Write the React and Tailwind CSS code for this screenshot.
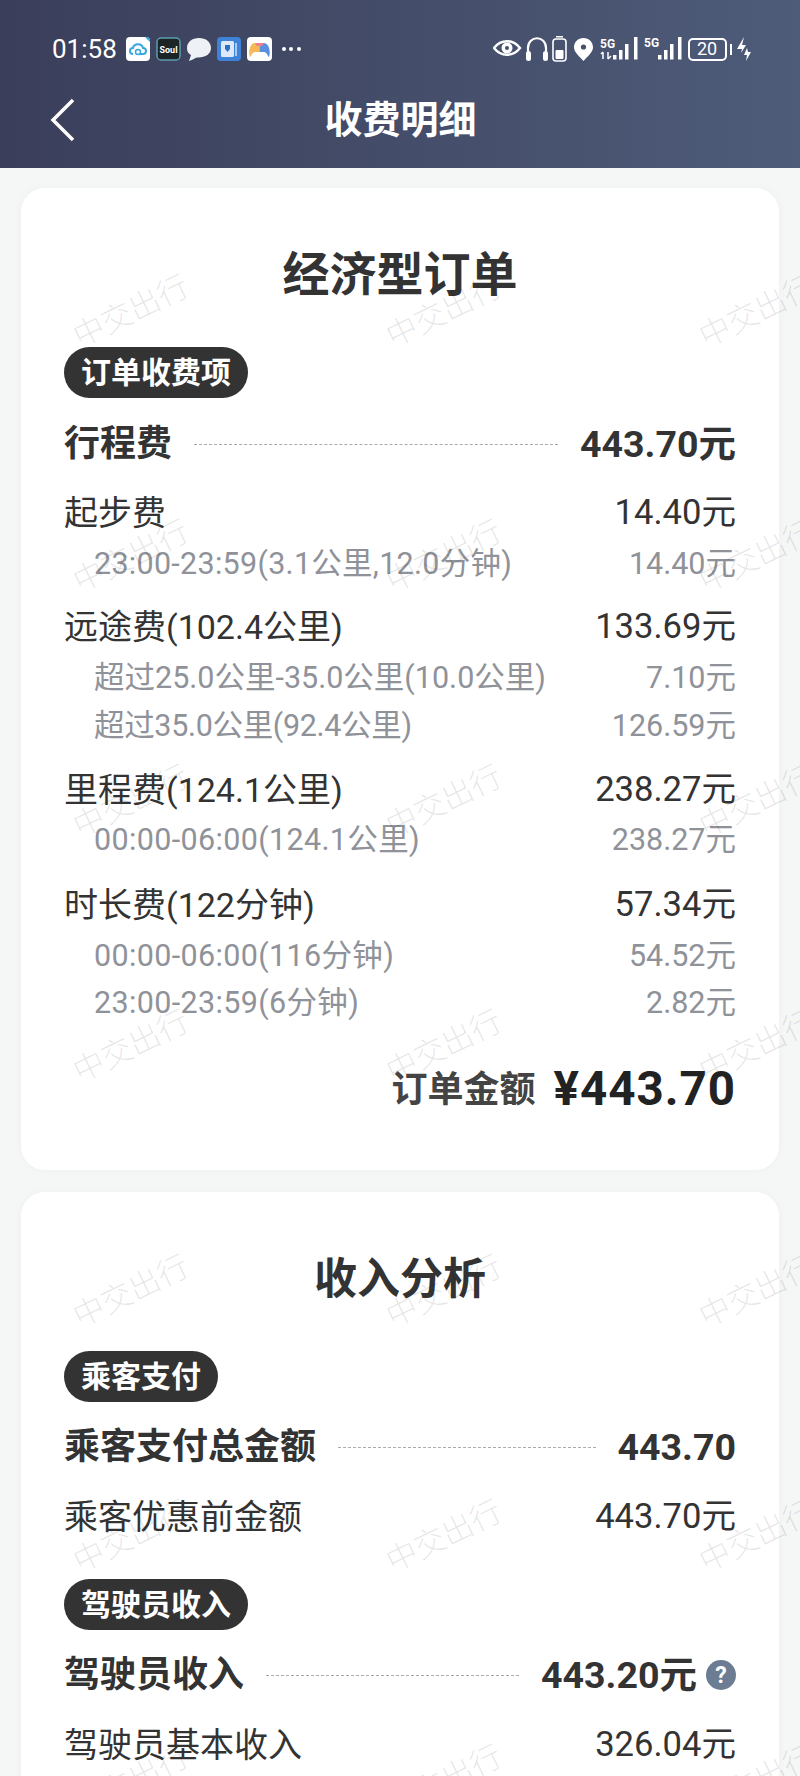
const font = { sans: 'font-[Roboto,"Noto_Sans_CJK_SC",sans-serif]' };

function StatusIcons() {
  return (
    <svg width="189" height="30" viewBox="0 0 189 30" fill="none">
      {/* eye */}
      <path d="M1 14 C8 5 20 5 27 14 C20 23 8 23 1 14 Z" stroke="#fff" strokeWidth="2.400" />
      <circle cx="14" cy="14" r="5.500" fill="#fff" />
      <circle cx="14" cy="14" r="2" fill="#46506c" />
      {/* headphones */}
      <path d="M35 20 V14 C35 1 53 1 53 14 V20" stroke="#fff" strokeWidth="2.200" />
      <rect x="33" y="17" width="5" height="10" rx="2.500" fill="#fff" />
      <rect x="50" y="17" width="5" height="10" rx="2.500" fill="#fff" />
      {/* small battery */}
      <rect x="60" y="5" width="13" height="22" rx="3" stroke="#fff" strokeWidth="1.600" />
      <rect x="63" y="2" width="7" height="1.500" fill="#fff" />
      <rect x="62.500" y="16" width="8" height="9" rx="1" fill="#fff" />
      {/* pin */}
      <path d="M90.500 4 C85 4 81 8 81 13.500 C81 18 87 23 90.500 27 C94 23 100 18 100 13.500 C100 8 96 4 90.500 4 Z" fill="#fff" />
      <circle cx="90.500" cy="13" r="2.600" fill="#46506c" />
      {/* first sim */}
      <text x="107" y="14" fontSize="12" fontWeight="700" fill="#fff" fontFamily="Roboto, sans-serif">5G</text>
      <path d="M110 18 V25 M108 20 L110 18 M115 18 V25 M115 25 L118 22" stroke="#fff" strokeWidth="1.500" />
      <rect x="120" y="21" width="3.500" height="4.500" fill="#fff" />
      <rect x="126" y="16" width="3.500" height="9.500" fill="#fff" />
      <rect x="132" y="10" width="3.500" height="15.500" fill="#fff" />
      <rect x="141" y="3" width="3.500" height="22.500" fill="#fff" />
      {/* second sim */}
      <text x="151" y="13" fontSize="12" fontWeight="700" fill="#fff" fontFamily="Roboto, sans-serif">5G</text>
      <rect x="165" y="21" width="3.500" height="4.500" fill="#fff" />
      <rect x="171" y="16" width="3.500" height="9.500" fill="#fff" />
      <rect x="177" y="10" width="3.500" height="15.500" fill="#fff" />
      <rect x="185" y="3" width="3.500" height="22.500" fill="#fff" />
    </svg>
  );
}

function BatteryCharge() {
  return (
    <div className="flex items-center">
      <div className="flex h-[23px] w-[39px] items-center justify-center rounded-[5px] border-2 border-white text-[18px] leading-none text-white">20</div>
      <div className="ml-[3px] h-[11px] w-[2.500px] bg-white" />
      <svg width="14" height="24" viewBox="0 0 14 24" className="ml-[5px]">
        <path d="M7 0 L0 12 H5 L4 16 L9 8 H5 Z" fill="#fff" />
        <path d="M10 11 L7 18 H10 L9 24 L14 15 H11 Z" fill="#fff" />
      </svg>
    </div>
  );
}

function AppIcons() {
  return (
    <div className="ml-[9px] flex items-center gap-[6px]">
      <svg width="24" height="24" viewBox="0 0 24 24">
        <rect width="24" height="24" rx="4" fill="#fff" />
        <path d="M7 17 C3 17 3 11 7 11 C8 6 16 6 17 11 C21 11 21 17 17 17 H13" stroke="#38a7e0" strokeWidth="2" fill="none" />
        <circle cx="12" cy="15" r="2.500" stroke="#38a7e0" strokeWidth="1.500" fill="none" />
        <path d="M19 0 H20 A4 4 0 0 1 24 4 V5 Z" fill="#2aa3e8" />
      </svg>
      <svg width="25" height="24" viewBox="0 0 25 24">
        <rect x="1" y="1" width="23" height="22" rx="4" fill="#1c2426" stroke="#5b9db0" strokeWidth="1.500" />
        <text x="12.500" y="16" textAnchor="middle" fontSize="9" fontWeight="700" fill="#fff" fontFamily="Roboto, sans-serif">Soul</text>
      </svg>
      <svg width="24" height="24" viewBox="0 0 24 24">
        <path d="M12 1 C5 1 0 5 0 11 C0 15 2 17 4 18 L2 24 C6 23 8 21 10 20.500 C18 21 24 17 24 11 C24 5 19 1 12 1 Z" fill="#eef1f6" />
      </svg>
      <svg width="24" height="24" viewBox="0 0 24 24">
        <rect width="24" height="24" rx="4" fill="#3f83d8" />
        <rect x="4" y="4" width="13" height="16" rx="1.500" fill="#dbe9fb" />
        <rect x="18" y="6" width="2" height="13" fill="#a9cbf3" />
        <path d="M8 8 H13 V12 L10.500 15 L8 12 Z" fill="#2f6fc0" />
      </svg>
      <svg width="25" height="24" viewBox="0 0 25 24">
        <rect width="25" height="24" rx="4" fill="#fff" />
        <path d="M8 6 H12.500 V15 H8 C5 15 4 20 3 20 C1 15 3 6 8 6 Z" fill="#f7b955" />
        <path d="M12.500 6 H17 C22 6 24 15 22 20 C21 20 20 15 17 15 H12.500 Z" fill="#5a8fe0" />
        <path d="M8 6 H17 L15 9 H10 Z" fill="#ef7f8f" />
      </svg>
      <div className="ml-[4px] flex gap-[3.500px]">
        <span className="size-[4px] rounded-full bg-white" />
        <span className="size-[4px] rounded-full bg-white" />
        <span className="size-[4px] rounded-full bg-white" />
      </div>
    </div>
  );
}

function Tag({ children }) {
  return (
    <div className="flex h-[51px] w-fit items-center rounded-full bg-[#333333] px-[17px] text-[30px] leading-none font-bold text-white">
      {children}
    </div>
  );
}

function MainRow({ label, value, className, children }) {
  return (
    <div className={`flex h-[50px] items-center text-[36px] font-bold text-[#333333] ${className}`}>
      <span>{label}</span>
      <span className="mx-[22px] h-0 flex-1 border-t border-dashed border-[#aaaaaa]" />
      <span className="text-[37.500px]">{value}</span>
      {children}
    </div>
  );
}

function ItemRow({ label, value, className = '' }) {
  return (
    <div className={`flex h-[50px] items-center justify-between text-[34px] text-[#333333] ${className}`}>
      <span>{label}</span>
      <span className="text-[34.600px]">{value}</span>
    </div>
  );
}

function SubRow({ label, value, className = '', labelClass = '' }) {
  return (
    <div className={`flex h-[48px] items-center justify-between pl-[30px] text-[30.500px] text-[#8f9299] ${className}`}>
      <span className={labelClass}>{label}</span>
      <span>{value}</span>
    </div>
  );
}

function Watermarks() {
  const cells = Array.from({ length: 21 });
  return (
    <div className="pointer-events-none absolute top-[189px] left-[-26px] grid grid-cols-[313px_313px_313px] auto-rows-[245px]">
      {cells.map((_, i) => (
        <div key={i} className="flex items-center justify-center">
          <span className="-rotate-[26deg] text-[31px] leading-none font-light whitespace-nowrap text-black/10">中交出行</span>
        </div>
      ))}
    </div>
  );
}

export default function App() {
  return (
    <div className={`relative h-[1776px] w-[800px] overflow-hidden bg-[#f5f6f6] ${font.sans}`}>
      <div className="h-[168px] bg-gradient-to-r from-[#3a3e5a] to-[#4e5c79] pr-[49px] pl-[50px]">
        <div className="flex h-[96px] items-center pt-[2px]">
          <span className="ml-[2px] text-[26px] text-white">01:58</span>
          <AppIcons />
          <div className="ml-auto flex items-center gap-[6px]">
            <StatusIcons />
            <BatteryCharge />
          </div>
        </div>
        <div className="relative flex h-[48px] items-center justify-center">
          <svg width="26" height="44" viewBox="0 0 26 44" className="absolute left-0" fill="none">
            <path d="M23 2 L3 22 L23 42" stroke="#fff" strokeWidth="3.500" />
          </svg>
          <span className="text-[38px] leading-none font-bold text-white">收费明细</span>
        </div>
      </div>

      <div className="mx-[21px] mt-[20px] rounded-[24px] bg-white px-[43px] pt-[57px] pb-[50px] shadow-[0_0_8px_rgba(0,0,0,0.03)]">
        <div className="text-center text-[47px] leading-[60px] font-bold text-[#333333]">经济型订单</div>
        <div className="mt-[42px]"><Tag>订单收费项</Tag></div>
        <MainRow label="行程费" value="443.70元" className="mt-[21px]" />
        <ItemRow label="起步费" value="14.40元" className="mt-[19px]" />
        <SubRow label="23:00-23:59(3.1公里,12.0分钟)" value="14.40元" className="mt-[2px]" labelClass="tracking-[0.28px]" />
        <ItemRow label="远途费(102.4公里)" value="133.69元" className="mt-[14px]" />
        <SubRow label="超过25.0公里-35.0公里(10.0公里)" value="7.10元" className="mt-[2px]" />
        <SubRow label="超过35.0公里(92.4公里)" value="126.59元" labelClass="tracking-[-0.33px]" />
        <ItemRow label="里程费(124.1公里)" value="238.27元" className="mt-[15px]" />
        <SubRow label="00:00-06:00(124.1公里)" value="238.27元" className="mt-[1px]" labelClass="tracking-[0.35px]" />
        <ItemRow label="时长费(122分钟)" value="57.34元" className="mt-[16px]" />
        <SubRow label="00:00-06:00(116分钟)" value="54.52元" className="mt-[2px]" labelClass="tracking-[0.35px]" />
        <SubRow label="23:00-23:59(6分钟)" value="2.82元" className="-mt-[1px]" labelClass="tracking-[0.35px]" />
        <div className="mt-[33px] flex h-[60px] items-center justify-end">
          <span className="text-[36px] font-bold text-[#444444]">订单金额</span>
          <span className="ml-[18px] text-[47.500px] font-bold tracking-[1px] text-[#222222]">¥443.70</span>
        </div>
      </div>

      <div className="mx-[21px] mt-[22px] rounded-[24px] bg-white px-[43px] pt-[57px] pb-[40px] shadow-[0_0_8px_rgba(0,0,0,0.03)]">
        <div className="text-center text-[43px] leading-[60px] font-bold text-[#333333]">收入分析</div>
        <div className="mt-[42px]"><Tag>乘客支付</Tag></div>
        <MainRow label="乘客支付总金额" value="443.70" className="mt-[20px]" />
        <ItemRow label="乘客优惠前金额" value="443.70元" className="mt-[20px]" />
        <div className="mt-[37px]"><Tag>驾驶员收入</Tag></div>
        <MainRow label="驾驶员收入" value="443.20元" className="mt-[20px]">
          <span className="ml-[9px] flex size-[30px] items-center justify-center rounded-full bg-[#6b7c93] text-[23px] leading-none font-bold text-white">?</span>
        </MainRow>
        <ItemRow label="驾驶员基本收入" value="326.04元" className="mt-[20px]" />
      </div>

      <Watermarks />
    </div>
  );
}
